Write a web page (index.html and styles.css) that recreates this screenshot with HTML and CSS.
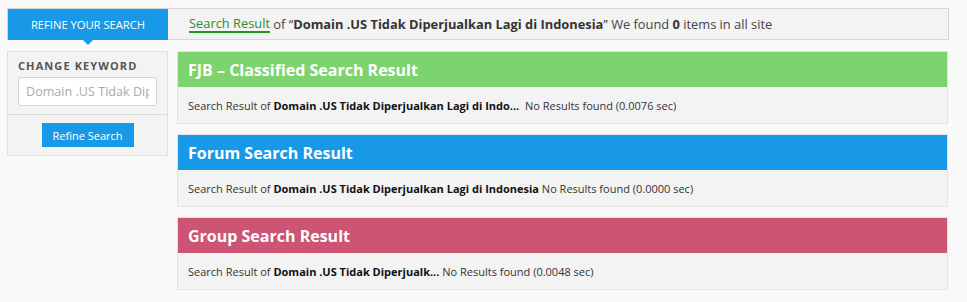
FILE: index.html
```html
<!DOCTYPE html>
<html>
<head>
<meta charset="utf-8">
<link rel="stylesheet" href="styles.css">
</head>
<body>
<div class="page">
  <div class="topbar">
    <div class="tab">REFINE YOUR SEARCH</div>
    <div class="summary"><a class="link" href="#">Search Result</a> of “<b>Domain .US Tidak Diperjualkan Lagi di Indonesia</b>” We found <b>0</b> items in all site</div>
  </div>
  <div class="content">
    <aside class="sidebar">
      <div class="kw">
        <div class="kw-label">CHANGE KEYWORD</div>
        <input class="kw-input" type="text" placeholder="Domain .US Tidak Diperjualkan Lagi di Indonesia">
      </div>
      <div class="kw-actions">
        <button class="btn">Refine Search</button>
      </div>
    </aside>
    <main class="results">
      <section class="panel">
        <div class="panel-head green">FJB – Classified Search Result</div>
        <div class="panel-body">Search Result of <b>Domain .US Tidak Diperjualkan Lagi di Indo...</b>&nbsp; No Results found (0.0076 sec)</div>
      </section>
      <section class="panel">
        <div class="panel-head blue">Forum Search Result</div>
        <div class="panel-body">Search Result of <b>Domain .US Tidak Diperjualkan Lagi di Indonesia</b> No Results found (0.0000 sec)</div>
      </section>
      <section class="panel">
        <div class="panel-head pink">Group Search Result</div>
        <div class="panel-body">Search Result of <b>Domain .US Tidak Diperjualk...</b> No Results found (0.0048 sec)</div>
      </section>
    </main>
  </div>
</div>
</body>
</html>
```
FILE: styles.css
```css
html, body {
  margin: 0;
  padding: 0;
  background: #f9f9f9;
  font-family: "Open Sans", "Noto Sans", sans-serif;
  color: #444;
}
.page {
  width: 942px;
  padding: 8px 0 0 7px;
}
.topbar {
  display: flex;
  align-items: stretch;
  height: 30px;
  background: #f3f3f3;
  border: 1px solid #d6d6d6;
}
.tab {
  position: relative;
  width: 160px;
  background: #1899e8;
  color: #fff;
  font-size: 11.2px;
  display: flex;
  align-items: center;
  justify-content: center;
  margin: 0 0 -1px 0;
}
.tab::after {
  content: "";
  position: absolute;
  left: 75px;
  bottom: -5px;
  border-left: 5px solid transparent;
  border-right: 5px solid transparent;
  border-top: 5px solid #1899e8;
}
.summary {
  display: flex;
  align-items: center;
  padding-left: 21px;
  font-size: 12.85px;
  color: #444;
  white-space: pre;
}
.summary b { color: #333; }
.link {
  color: #2e8b2e;
  text-decoration: none;
  border-bottom: 2px solid #1a9a1a;
  line-height: 15px;
}
.content {
  display: flex;
  gap: 9px;
  margin-top: 11px;
  align-items: flex-start;
}
.sidebar {
  width: 159px;
  background: #f3f3f3;
  border: 1px solid #e1e1e1;
}
.kw {
  padding: 7px 10px 8px 10px;
  border-bottom: 1px solid #dcdcdc;
}
.kw-label {
  font-size: 11px;
  font-weight: 700;
  letter-spacing: 1.1px;
  color: #555;
  line-height: 14px;
}
.kw-input {
  display: block;
  box-sizing: border-box;
  width: 139px;
  height: 29px;
  margin-top: 4px;
  border: 1px solid #d4d4d4;
  border-radius: 3px;
  background: #fff;
  font-family: "Open Sans", sans-serif;
  font-size: 12.6px;
  padding: 0 7px;
  color: #aaa;
}
.kw-input::placeholder { color: #aaa; }
.kw-actions {
  display: flex;
  justify-content: center;
  padding: 8px 0 8px;
}
.btn {
  display: block;
  width: 92px;
  height: 24px;
  border: 0;
  background: #1899e8;
  color: #fff;
  font-family: "Open Sans", sans-serif;
  font-size: 11px;
  padding: 0;
}
.results {
  width: 771px;
  display: flex;
  flex-direction: column;
  gap: 10px;
}
.panel {
  border: 1px solid #e3e3e3;
  background: #f3f3f3;
}
.panel-head {
  height: 35px;
  display: flex;
  align-items: center;
  padding-left: 10px;
  font-size: 16px;
  font-weight: 700;
  color: #fff;
}
.green { background: #7dd36d; }
.blue { background: #1899e8; }
.pink { background: #cd5472; }
.panel-body {
  height: 36px;
  display: flex;
  align-items: center;
  padding-left: 10px;
  font-size: 11px;
  color: #333;
  white-space: pre;
}
.panel-body b { color: #111; }
```
